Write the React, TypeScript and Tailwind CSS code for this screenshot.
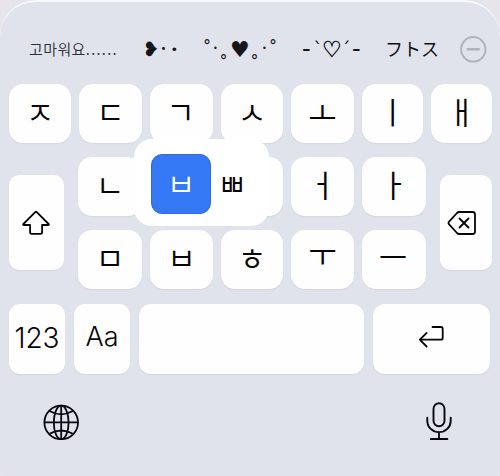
import type { ReactNode } from 'react';

const korean = "font-['Noto_Sans_CJK_KR','Noto_Sans',sans-serif]";

function Key({ className = '', children }: { className?: string; children?: ReactNode }) {
  return (
    <div
      className={`flex items-center justify-center bg-[#fefefe] shadow-[0_1px_1px_rgba(120,125,150,0.12)] ${className}`}
    >
      {children}
    </div>
  );
}

function Jamo({ char, nudge = '-translate-y-[3px]' }: { char: string; nudge?: string }) {
  return <span className={`block text-[31px] font-[350] leading-none ${korean} ${nudge}`}>{char}</span>;
}

// Optical corrections for letters whose ink sits off the centre of their box.
const nudges: Record<string, string> = {
  ㄱ: '-translate-x-px -translate-y-[3px]',
  ㅗ: '-translate-y-[2px]',
  ㅜ: '-translate-y-[7px]',
  ㅡ: '-translate-x-px -translate-y-[4px]',
};

const topRow = [
  { char: 'ㅈ', width: 'w-[62px]' },
  { char: 'ㄷ', width: 'w-[63px]' },
  { char: 'ㄱ', width: 'w-[63px]' },
  { char: 'ㅅ', width: 'w-[62px]' },
  { char: 'ㅗ', width: 'w-[63px]' },
  { char: 'ㅣ', width: 'w-[61px]' },
  { char: 'ㅐ', width: 'w-[61px]' },
];

const centerRows = [
  ['ㄴ', '', '', 'ㅓ', 'ㅏ'],
  ['ㅁ', 'ㅂ', 'ㅎ', 'ㅜ', 'ㅡ'],
];

function ShiftIcon() {
  return (
    <svg className="-translate-x-px" width="30" height="28" viewBox="0 0 30 28" fill="none" stroke="#050505" strokeWidth="1.8" strokeLinejoin="round">
      <path d="M14.2 3.2Q15 2.4 15.8 3.2L27.6 15Q28.4 16 27.2 16H21.1V23.2Q21.1 24.8 19.5 24.8H10.7Q9.1 24.8 9.1 23.2V16H2.8Q1.6 16 2.4 15Z" />
    </svg>
  );
}

function DeleteIcon() {
  return (
    <svg width="30" height="26" viewBox="0 0 30 26" fill="none" stroke="#050505" strokeWidth="1.8" strokeLinecap="round" strokeLinejoin="round">
      <path d="M12 2H25.5Q28 2 28 4.5V21.5Q28 24 25.5 24H12Q11 24 10 23L2.1 14.3Q1 13 2.1 11.7L10 3Q11 2 12 2Z" />
      <path d="m12.5 8.5 9 9m0-9-9 9" />
    </svg>
  );
}

function ReturnIcon() {
  return (
    <svg className="-translate-x-px -translate-y-[2px]" width="28" height="24" viewBox="0 0 28 24" fill="none" stroke="#050505" strokeWidth="1.8" strokeLinecap="round" strokeLinejoin="round">
      <path d="M15.5 2H24Q25.7 2 25.7 3.7V13Q25.7 14.7 24 14.7H3M9.6 8 2.8 14.7l6.8 6.8" />
    </svg>
  );
}

function GlobeIcon() {
  return (
    <svg className="mt-px" width="38" height="38" viewBox="0 0 38 38" fill="none" stroke="#05070c" strokeWidth="1.8">
      <circle cx="19.2" cy="19.4" r="16.8" />
      <ellipse cx="19.2" cy="19.4" rx="7.4" ry="16.8" />
      <path d="M19.2 2.6v33.6M2.4 19.4h33.6M7 7.8Q19.2 14.8 31.4 7.8M7 31Q19.2 24 31.4 31" />
    </svg>
  );
}

function MicIcon() {
  return (
    <svg width="28" height="40" viewBox="0 0 28 40" fill="none" stroke="#05070c" strokeWidth="1.9" strokeLinecap="round">
      <rect x="8.5" y="1.2" width="11" height="23" rx="5.5" />
      <path d="M2.3 15.6v3.3a11.7 11.2 0 0 0 23.4 0v-3.3M14 30.2v6.6M5.8 37h16.6" />
    </svg>
  );
}

function Suggestions() {
  return (
    <div className="flex h-[84px] items-start pt-[34px] leading-[30px] text-[#14161c] font-['DejaVu_Sans',sans-serif]">
      <div className={`ml-[29px] h-[30px] w-[113.5px] whitespace-nowrap text-[15px] font-[350] tracking-[0.4px] text-[#2b2e36] ${korean}`}>
        고마워요<span className="tracking-[1.3px]">......</span>
      </div>
      <div className="flex h-[30px] w-[60px]">
        <span className="w-[18px] text-[20px]">❥</span>
        <span className="w-[10px] text-[10px]">•</span>
        <span className="translate-y-px text-[13px]">•</span>
      </div>
      <div className="flex h-[30px] w-[99.5px] text-[18px]">
        <span className="w-[10.5px]">˚</span>
        <span className="w-[6px] text-[8px]">•</span>
        <span className="w-[11px] translate-y-[15px]">˚</span>
        <span className="w-[20px] translate-y-px text-[22px]">♥</span>
        <span className="w-[12px] translate-y-[15px]">˚</span>
        <span className="w-[6.5px] text-[8px]">•</span>
        <span>˚</span>
      </div>
      <div className="flex h-[30px] w-[83px] text-[18px]">
        <span className="w-[11.5px] text-[24px]">-</span>
        <span className="w-[8.5px]">`</span>
        <span className="w-[19.5px] translate-y-px text-[22px] [-webkit-text-stroke:0.5px_#14161c]">♡</span>
        <span className="w-[10.5px]">´</span>
        <span className="text-[24px]">-</span>
      </div>
      <div className="h-[30px] w-[75px] -translate-y-px text-[18px] text-[#0d0f15] font-['Noto_Sans_CJK_JP',sans-serif]">フトス</div>
      <svg className="mt-[1px]" width="28" height="28" viewBox="0 0 28 28" fill="none" stroke="#b1b3bb">
        <circle cx="13.3" cy="14.3" r="12.2" strokeWidth="2" />
        <path d="M7.8 14.3h11" strokeWidth="2.5" strokeLinecap="round" />
      </svg>
    </div>
  );
}

function LongPressMenu() {
  return (
    <div className="absolute -left-4 -top-[18px] z-10 flex h-[87px] w-[135px] items-center rounded-[18px] bg-white pl-[17px] pt-[3px]">
      <div className="flex h-[60px] w-[60px] items-center justify-center rounded-[11px] border border-[#2c6be2] bg-[#3478f5] text-white">
        <Jamo char="ㅂ" nudge="-translate-y-[2px]" />
      </div>
      <div className="flex w-[42px] justify-center">
        <Jamo char="ㅃ" nudge="-translate-y-[2px]" />
      </div>
    </div>
  );
}

export default function App() {
  return (
    <main className="h-[476px] w-[500px] overflow-hidden bg-[#e5e5eb]">
      <div className="h-full rounded-t-[36px] rounded-b-[8px] border-t-2 border-[#f8f9fc] bg-[#e0e3eb] text-[#050505]">
        <div className="-mt-[2px]">
          <Suggestions />
          <div className="flex justify-between pl-[9px] pr-2">
            {topRow.map(({ char, width }) => (
              <Key key={char} className={`h-[59px] rounded-[14px] ${width}`}>
                <Jamo char={char} nudge={nudges[char]} />
              </Key>
            ))}
          </div>
          <div className="mt-[14px] flex h-[133px] items-start pl-[9px]">
            <Key className="mt-[18px] h-[95px] w-[55px] rounded-[10px]">
              <ShiftIcon />
            </Key>
            <div className="ml-[14px] grid grid-cols-[64px_63px_62px_63px_64px] gap-x-2 gap-y-[14px]">
              {centerRows.map((row, r) =>
                row.map((char, c) => (
                  <div key={`${r}-${c}`} className="relative h-[59px]">
                    <Key className="h-full rounded-[14px]">
                      <Jamo char={char} nudge={nudges[char]} />
                    </Key>
                    {r === 0 && c === 1 && <LongPressMenu />}
                  </div>
                )),
              )}
            </div>
            <Key className="ml-[14px] mt-[18px] h-[95px] w-[52px] rounded-[10px] pr-[9px]">
              <DeleteIcon />
            </Key>
          </div>
          <div className="mt-[14px] flex h-[70px] gap-[9px] pl-[9px] font-['Inter',sans-serif] text-[28px] font-light">
            <Key className="w-[56px] rounded-[11px] pb-[3px]">123</Key>
            <Key className="w-[56px] rounded-[11px] pb-[4px] text-[27px]">Aa</Key>
            <Key className="w-[225px] rounded-[12px]" />
            <Key className="w-[117px] rounded-[12px]">
              <ReturnIcon />
            </Key>
          </div>
          <div className="flex justify-between pl-[42px] pr-[47px] pt-[28px]">
            <GlobeIcon />
            <MicIcon />
          </div>
        </div>
      </div>
    </main>
  );
}
